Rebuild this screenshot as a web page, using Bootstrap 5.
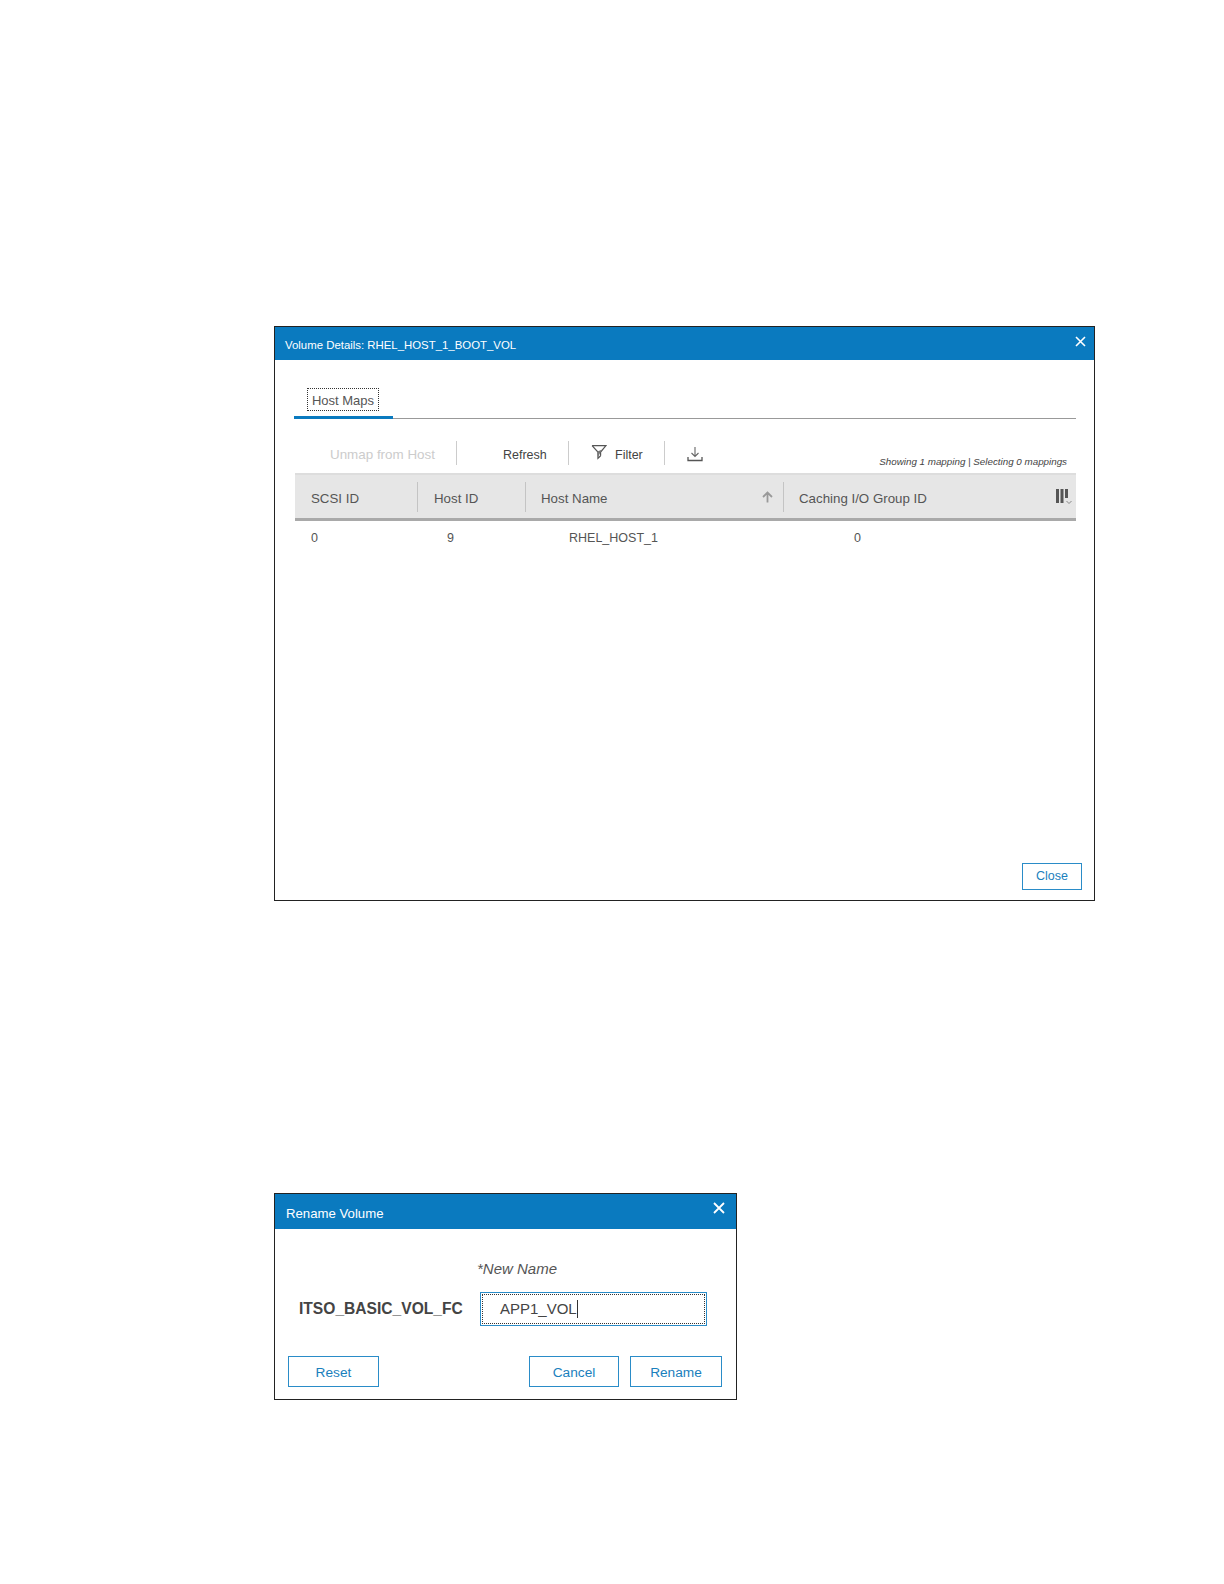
<!DOCTYPE html>
<html lang="en">
<head>
<meta charset="utf-8">
<title>Volume dialogs</title>
<link rel="stylesheet" href="https://cdn.jsdelivr.net/npm/bootstrap@5.3.0/dist/css/bootstrap.min.css">
<style>
html,body{background:#fff;margin:0}
body{font-family:"Liberation Sans",Arial,sans-serif;color:#555;height:1584px;overflow:hidden}
.dlg{border:1px solid #222;border-radius:0;margin-left:274px;background:#fff;display:flex;flex-direction:column}
.dlg-a{width:821px;height:575px;margin-top:326px}
.dlg-b{width:463px;height:207px;margin-top:292px}
.dlg .dlg-head:first-child{background:#0a7abf;color:#fff;border:0;border-radius:0;display:flex;justify-content:space-between;align-items:center}
.dlg-a .dlg-head:first-child{height:33px;padding:4px 8px 0 10px;font-size:11.4px}
.dlg-b .dlg-head:first-child{height:35px;padding:4px 11px 0 11px;font-size:13.2px}
.x-btn{display:block;margin-top:-9px}
.dlg-b .x-btn{margin-top:-12px}
.tabbar{margin:28px 18px 0 19px;border-bottom:1px solid #999;height:31px;display:flex;padding:0}
.tabitem{width:99px;height:31px;border-bottom:3px solid #0a7abf;margin-bottom:-1px;padding:0 0 0 13px}
.tabfocus{display:block;width:72px;height:23px;border:1px dotted #333;font-size:13px;line-height:23px;text-align:center;color:#555}
.toolbar{margin:22px 18px 0 20px;height:32px;display:flex;font-size:12.5px;color:#444}
.tool{height:24px;border-right:1px solid #ccc;display:flex;align-items:center;padding:4px 0 0}
.t1{width:162px;padding-left:35px;color:#ccc;font-size:13.4px}
.t2{width:112px;padding-left:46px}
.t3{width:96px;padding-left:22px;gap:8px}
.t3 svg{margin-top:-7px}
.t4{padding-left:22px;border:0;align-items:flex-start;padding-top:5px}
.status{margin-left:auto;padding:14px 9px 0 0;font-style:italic;font-size:9.8px;color:#444;line-height:14px}
.grid{width:781px;table-layout:fixed;margin:0 18px 0 20px;border-collapse:separate;border-spacing:0;font-size:13.3px;color:#555}
.grid th{background:#e6e6e6;font-weight:400;height:48px;padding:0;border-top:2px solid #ddd;border-bottom:3px solid #a9a9a9;vertical-align:middle}
.grid td{padding:0;height:34px;border:0;font-size:12.5px;vertical-align:middle;color:#555}
.thc{display:flex;align-items:center;height:30px;padding:4px 10px 0 16px;border-right:1px solid #c4c4c4;justify-content:space-between;margin-top:1px}
.thc svg{margin-top:-4px}
.thn{padding-left:15px}
.thc.last{border:0;padding-right:3px}
.c1{padding-left:16px!important}
.c2{padding-left:29px!important}
.c3{padding-left:43px!important}
.c4{padding-left:70px!important}
.dlg-foot{margin-top:auto;padding:0 12px 10px 0;display:flex;justify-content:flex-end}
.btn-blue{border:1px solid #2a8cc8;border-radius:0;background:#fff;color:#1a80bd;font-size:12.5px;padding:0;display:flex;align-items:center;justify-content:center}
.btn-close-a{width:60px;height:27px}
.btn-w{height:31px;font-size:13.7px;padding-top:3px}
.rn-label{margin:0 0 0 202px;padding-top:28px;height:52px;font-style:italic;font-size:15px;line-height:24px;color:#555}
.rn-row{display:flex;align-items:center;padding-left:24px;height:34px;margin-top:11px}
.rn-name{width:181px;font-weight:700;font-size:15.6px;color:#444;white-space:nowrap}
.rn-input{width:227px;height:34px;border:1px solid #2a8cc8;border-radius:0;padding:1px;background:#fff}
.rn-inner{border:1px dotted #333;height:100%;padding:0 0 0 17px;font-size:15px;color:#444;display:flex;align-items:center}
.caret{display:inline-block;width:1px;height:18px;background:#333}
.rn-actions{display:flex;padding:30px 14px 0 13px;gap:11px}
.rn-reset{width:91px;margin-right:auto}
.rn-cancel{width:90px}
.rn-rename{width:92px}
</style>
</head>
<body>
<section class="card dlg dlg-a">
  <div class="card-header dlg-head">
    <span>Volume Details: RHEL_HOST_1_BOOT_VOL</span>
    <svg class="x-btn" width="11" height="11" viewBox="0 0 11 11" aria-hidden="true"><path d="M1 1l9 9M10 1l-9 9" stroke="#fff" stroke-width="1.6"/></svg>
  </div>
  <ul class="nav tabbar">
    <li class="tabitem"><a class="tabfocus text-decoration-none" href="#">Host Maps</a></li>
  </ul>
  <div class="toolbar">
    <span class="tool t1">Unmap from Host</span>
    <span class="tool t2">Refresh</span>
    <span class="tool t3">
      <svg width="16" height="16" viewBox="0 0 15 15" aria-hidden="true"><path d="M1 1.500h13L9 7.500v3.500M1 1.500l5.500 6v6l2.500-2.500" fill="none" stroke="#555" stroke-width="1.1"/><path d="M6 7l4-1.500-3.500 7z" fill="#777"/></svg>
      Filter
    </span>
    <span class="tool t4">
      <svg width="16" height="16" viewBox="0 0 16 16" aria-hidden="true"><path d="M8 1v9M4.500 7l3.500 3.500L11.500 7" fill="none" stroke="#666" stroke-width="1.1"/><path d="M1 11v3.500h14V11" fill="none" stroke="#555" stroke-width="1.3"/></svg>
    </span>
    <span class="status">Showing 1 mapping | Selecting 0 mappings</span>
  </div>
  <table class="grid">
    <colgroup><col style="width:123px"><col style="width:108px"><col style="width:258px"><col style="width:292px"></colgroup>
    <thead>
      <tr>
        <th><div class="thc">SCSI ID</div></th>
        <th><div class="thc">Host ID</div></th>
        <th><div class="thc thn">Host Name
          <svg width="11" height="12" viewBox="0 0 11 12" aria-hidden="true"><path d="M5.500 11.500V2M1 6l4.500-4.500L10 6" fill="none" stroke="#999" stroke-width="1.800"/></svg>
        </div></th>
        <th><div class="thc thn last">Caching I/O Group ID
          <svg width="18" height="18" viewBox="0 0 18 18" aria-hidden="true"><path d="M1 1h3v14H1zM5.500 1h3v14h-3zM10 1h3v9h-3z" fill="#555"/><path d="M11.500 13l2.500 2.500L16.500 13" fill="none" stroke="#888" stroke-width="1"/></svg>
        </div></th>
      </tr>
    </thead>
    <tbody>
      <tr><td class="c1">0</td><td class="c2">9</td><td class="c3">RHEL_HOST_1</td><td class="c4">0</td></tr>
    </tbody>
  </table>
  <div class="dlg-foot">
    <button type="button" class="btn btn-blue btn-close-a">Close</button>
  </div>
</section>

<section class="card dlg dlg-b">
  <div class="card-header dlg-head">
    <span>Rename Volume</span>
    <svg class="x-btn" width="12" height="12" viewBox="0 0 12 12" aria-hidden="true"><path d="M1 1l10 10M11 1L1 11" stroke="#fff" stroke-width="1.800"/></svg>
  </div>
  <p class="rn-label">*New Name</p>
  <div class="rn-row">
    <span class="rn-name">ITSO_BASIC_VOL_FC</span>
    <div class="rn-input"><div class="rn-inner">APP1_VOL<span class="caret"></span></div></div>
  </div>
  <div class="rn-actions">
    <button type="button" class="btn btn-blue btn-w rn-reset">Reset</button>
    <button type="button" class="btn btn-blue btn-w rn-cancel">Cancel</button>
    <button type="button" class="btn btn-blue btn-w rn-rename">Rename</button>
  </div>
</section>
<script src="https://cdn.jsdelivr.net/npm/bootstrap@5.3.0/dist/js/bootstrap.bundle.min.js"></script>
</body>
</html>
